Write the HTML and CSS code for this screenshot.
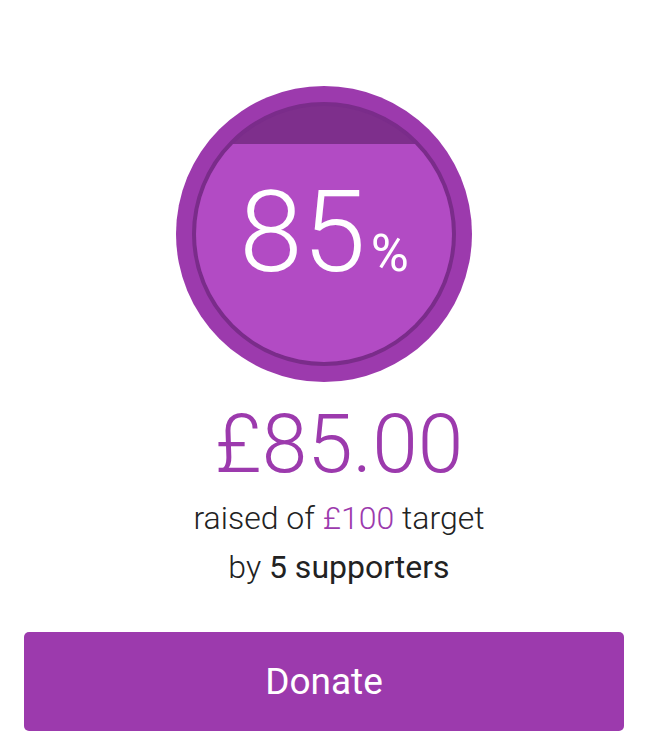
FILE: index.html
```html
<!DOCTYPE html>
<html lang="en">
<head>
    <meta charset="UTF-8">
    <meta name="viewport" content="width=device-width, initial-scale=1.0">
    <title>Fundraising Progress</title>
    <link rel="stylesheet" href="styles.css">
</head>
<body>
    <div class="container">
        <div class="progress-ring">
            <div class="progress-inner">
                <div class="progress-fill" style="height: 85%;"></div>
                <div class="progress-label">85<span class="pct">%</span></div>
            </div>
        </div>

        <div class="totals">
            <div class="amount">£85.00</div>
            <p class="target">raised of <span class="highlight">£100</span> target</p>
            <p class="supporters">by <strong>5 supporters</strong></p>
        </div>

        <button type="button" class="donate-btn">Donate</button>
    </div>
</body>
</html>
```

FILE: styles.css
```css
body {
    font-family: Roboto, "Noto Sans", Arial, sans-serif;
    background-color: #ffffff;
    color: #222222;
    margin: 0;
    padding: 0;
}
.container {
    width: 600px;
    margin: 0 auto;
    padding-top: 86px;
    display: flex;
    flex-direction: column;
    align-items: center;
}
.progress-ring {
    width: 296px;
    height: 296px;
    box-sizing: border-box;
    padding: 16px;
    border-radius: 50%;
    background-color: #9c3aad;
}
.progress-inner {
    position: relative;
    width: 264px;
    height: 264px;
    box-sizing: border-box;
    border: 4px solid #7a2c8a;
    border-radius: 50%;
    background-color: #7e2f8c;
    overflow: hidden;
    display: flex;
    align-items: center;
    justify-content: center;
}
.progress-fill {
    position: absolute;
    left: 0;
    right: 0;
    bottom: 0;
    background-color: #b24bc4;
}
.progress-label {
    position: relative;
    color: #ffffff;
    font-size: 114px;
    font-weight: 300;
    line-height: 1;
    margin-top: -4px;
}
.pct {
    font-size: 52px;
    font-weight: 400;
    margin-left: 5px;
}
.totals {
    padding-left: 30px;
    text-align: center;
}
.amount {
    color: #9c3aad;
    font-size: 82px;
    font-weight: 300;
    line-height: 82px;
    margin-top: 21px;
}
.target,
.supporters {
    margin: 0;
    font-size: 32px;
    font-weight: 300;
    line-height: 49px;
}
.target {
    margin-top: 9px;
}
.highlight {
    color: #9c3aad;
}
.supporters strong {
    font-weight: 400;
}
.donate-btn {
    width: 600px;
    height: 99px;
    margin-top: 40px;
    background-color: #9c3aad;
    color: #ffffff;
    font-family: inherit;
    font-size: 37px;
    font-weight: 400;
    border: none;
    border-radius: 5px;
    cursor: pointer;
}
```
